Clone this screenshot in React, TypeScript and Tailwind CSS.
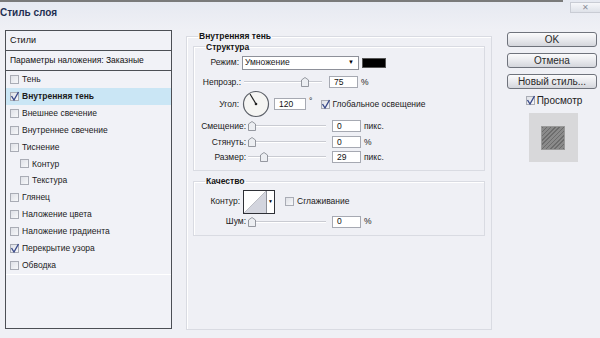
import React from "react";

const F = { fontFamily: '"Liberation Sans", Arial, sans-serif' };

function Check({ checked }: { checked?: boolean }) {
  return (
    <span className="relative inline-block w-[9px] h-[9px] border border-[#a9acb5] bg-gradient-to-br from-[#dfe1e7] to-[#f7f8fa] shrink-0">
      {checked && (
        <svg viewBox="0 0 10 10" className="absolute left-[-1px] top-[-2px] w-[10px] h-[11px]">
          <path d="M1.5 4.5 L4 8.5 L8.5 0.5" stroke="#3a4a8a" strokeWidth="1.4" fill="none" />
        </svg>
      )}
    </span>
  );
}

function ListRow({ label, checked, indent, active }: { label: string; checked?: boolean; indent?: boolean; active?: boolean }) {
  return (
    <div className={`flex items-center h-[16.9px] gap-[3px] ${indent ? "pl-[14px]" : "pl-[4px]"} ${active ? "bg-[#cae6f5]" : ""}`}>
      <Check checked={checked} />
      <span className={`text-[8.5px] text-[#1b1b1b] ${active ? "font-bold" : ""}`}>{label}</span>
    </div>
  );
}

function Slider({ pos }: { pos: number }) {
  return (
    <div className="relative w-[78px] h-[12px]">
      <div className="absolute left-0 right-0 top-[5px] h-[2px] bg-[#c9cbd2] border-b border-white" />
      <svg viewBox="0 0 8 10" className="absolute top-[1px] w-[8px] h-[10px]" style={{ left: pos }}>
        <path d="M0.5 3 L4 0.5 L7.5 3 L7.5 9.5 L0.5 9.5 Z" fill="#eceef2" stroke="#7d818a" strokeWidth="0.8" />
      </svg>
    </div>
  );
}

function Input({ value, w = 29 }: { value: string; w?: number }) {
  return (
    <div className="h-[12px] border border-[#a6a9b2] bg-white flex items-center pl-[4px] text-[8.5px] text-[#111]" style={{ width: w }}>
      {value}
    </div>
  );
}

function Btn({ label }: { label: string }) {
  return (
    <div className="h-[15px] w-[90px] rounded-[3px] border border-[#6f737c] bg-gradient-to-b from-[#fbfbfc] via-[#e9eaee] to-[#d4d6dc] flex items-center justify-center text-[10px] text-[#2a2a2a]">
      {label}
    </div>
  );
}

export default function App() {
  return (
    <div style={F} className="w-[600px] h-[338px] bg-[#eff0f5] flex flex-col overflow-hidden">
      {/* title bar */}
      <div className="h-[30px] flex flex-col bg-gradient-to-b from-[#e6e9f1] to-[#eff0f5]">
        <div className="flex h-[14px]">
          <div className="w-[563px] flex flex-col">
            <div className="h-[2px] bg-[#7a7a7a]" />
          </div>
          <div className="flex-1 h-[11px] mt-[2px] ml-[7px] border border-r-0 border-[#c9ccd4] bg-gradient-to-b from-[#f6f7fa] to-[#dfe2e9] flex items-center justify-center text-[8px] text-[#8a8e98] leading-none">
            ✕
          </div>
        </div>
        <div className="text-[10px] font-bold text-[#1f2f52] leading-none mt-[-6px]">Стиль слоя</div>
      </div>

      <div className="flex flex-1 pb-[8px]">
        {/* left list */}
        <div className="ml-[5px] w-[167px] h-[299px] border border-[#4c4f55] bg-[#f1f2f7] flex flex-col">
          <div className="h-[20px] border-b border-[#4c4f55] flex items-center pl-[4px] text-[9px] text-[#111]">Стили</div>
          <div className="h-[20px] border-b border-[#4c4f55] flex items-center pl-[4px] text-[8.5px] text-[#111]">
            Параметры наложения: Заказные
          </div>
          <div className="flex flex-col">
            <ListRow label="Тень" />
            <ListRow label="Внутренняя тень" checked active />
            <ListRow label="Внешнее свечение" />
            <ListRow label="Внутреннее свечение" />
            <ListRow label="Тиснение" />
            <ListRow label="Контур" indent />
            <ListRow label="Текстура" indent />
            <ListRow label="Глянец" />
            <ListRow label="Наложение цвета" />
            <ListRow label="Наложение градиента" />
            <ListRow label="Перекрытие узора" checked />
            <ListRow label="Обводка" />
          </div>
          <div className="h-[1px] bg-[#e3e5ec] border-b border-white" />
        </div>

        {/* middle */}
        <fieldset className="ml-[14px] mt-[2px] w-[306px] h-[298px] border border-[#d9dbe2] shadow-[inset_1px_1px_0_#ffffff] px-[6px] pb-[6px] min-w-0">
          <legend className="ml-[5px] px-[1px] text-[8.5px] font-bold text-[#151515] leading-none">Внутренняя тень</legend>

          <fieldset className="mt-[2px] border border-[#d9dbe2] shadow-[inset_1px_1px_0_#ffffff] pb-[6px] min-w-0">
            <legend className="ml-[11px] px-[1px] text-[8.5px] font-bold text-[#151515] leading-none">Структура</legend>
            <div className="flex flex-col text-[8.5px] text-[#1a1a1a]">
              {/* Режим */}
              <div className="flex items-center h-[15px] mt-[4px]">
                <div className="w-[48px] text-right pr-[3px]">Режим:</div>
                <div className="w-[117px] h-[14px] border border-[#8d9099] bg-white flex items-center pl-[2px] justify-between pr-[4px]">
                  <span>Умножение</span>
                  <span className="text-[6px] text-black">▼</span>
                </div>
                <div className="ml-[3px] w-[24px] h-[10px] bg-black border border-[#555]" />
              </div>
              {/* Непрозр */}
              <div className="flex items-center h-[14px] mt-[5px]">
                <div className="w-[50px] text-right pr-[3px]">Непрозр.:</div>
                <Slider pos={57} />
                <div className="ml-[7px]"><Input value="75" /></div>
                <span className="ml-[3px]">%</span>
              </div>
              {/* Угол */}
              <div className="flex items-center h-[28px] mt-[1px]">
                <div className="w-[48px] text-right pr-[3px]">Угол:</div>
                <svg viewBox="0 0 28 28" className="w-[28px] h-[28px]">
                  <circle cx="14" cy="14" r="12.5" fill="#f5f5f3" stroke="#5c6068" strokeWidth="1.2" />
                  <path d="M14 14 L8 4" stroke="#222" strokeWidth="1.2" />
                  <circle cx="14" cy="14" r="1.3" fill="#222" />
                </svg>
                <div className="ml-[4px]"><Input value="120" w={32} /></div>
                <span className="ml-[3px] mt-[-5px]">°</span>
                <div className="ml-[9px] flex items-center gap-[2px]">
                  <Check checked />
                  <span>Глобальное освещение</span>
                </div>
              </div>
              {/* Смещение */}
              <div className="flex items-center h-[14px] mt-[1px]">
                <div className="w-[54px] text-right pr-[2px]">Смещение:</div>
                <Slider pos={0} />
                <div className="ml-[6px]"><Input value="0" /></div>
                <span className="ml-[3px]">пикс.</span>
              </div>
              <div className="flex items-center h-[14px] mt-[2px]">
                <div className="w-[54px] text-right pr-[2px]">Стянуть:</div>
                <Slider pos={0} />
                <div className="ml-[6px]"><Input value="0" /></div>
                <span className="ml-[3px]">%</span>
              </div>
              <div className="flex items-center h-[14px] mt-[1px]">
                <div className="w-[54px] text-right pr-[2px]">Размер:</div>
                <Slider pos={12} />
                <div className="ml-[6px]"><Input value="29" /></div>
                <span className="ml-[3px]">пикс.</span>
              </div>
            </div>
          </fieldset>

          <fieldset className="mt-[6px] border border-[#d9dbe2] shadow-[inset_1px_1px_0_#ffffff] pb-[6px] min-w-0">
            <legend className="ml-[11px] px-[1px] text-[8.5px] font-bold text-[#151515] leading-none">Качество</legend>
            <div className="flex flex-col text-[8.5px] text-[#1a1a1a]">
              <div className="flex items-center h-[24px] mt-[4px]">
                <div className="w-[49px] text-right pr-[3px]">Контур:</div>
                <div className="w-[32px] h-[24px] border border-[#2e3036] bg-white flex">
                  <svg viewBox="0 0 22 22" preserveAspectRatio="none" className="w-[22px] h-full">
                    <path d="M0 22 L22 0 L22 22 Z" fill="#d3d5de" />
                    <path d="M0 22 L22 0" stroke="#9da0aa" strokeWidth="0.6" />
                  </svg>
                  <div className="flex-1 border-l border-[#8d9099] flex items-center justify-center text-[5px] text-black pt-[1px]">▼</div>
                </div>
                <div className="ml-[10px] flex items-center gap-[3px]">
                  <Check />
                  <span>Сглаживание</span>
                </div>
              </div>
              <div className="flex items-center h-[14px] mt-[1px]">
                <div className="w-[54px] text-right pr-[2px]">Шум:</div>
                <Slider pos={0} />
                <div className="ml-[6px]"><Input value="0" /></div>
                <span className="ml-[3px]">%</span>
              </div>
            </div>
          </fieldset>
        </fieldset>

        {/* right column */}
        <div className="ml-[15px] mt-[2px] flex flex-col gap-[6px]">
          <Btn label="OK" />
          <Btn label="Отмена" />
          <Btn label="Новый стиль..." />
          <div className="flex flex-col items-center">
            <div className="flex items-center gap-[2px] mt-[-2px] ml-[4px]">
              <Check checked />
              <span className="text-[10px] text-[#222]">Просмотр</span>
            </div>
            <div className="mt-[5px] ml-[2px] w-[49px] h-[49px] bg-[#d8d8da] flex items-center justify-center">
              <div className="w-[24px] h-[24px] bg-[repeating-linear-gradient(135deg,#6c6c6c_0px,#6c6c6c_1px,#8a8a8a_1px,#8a8a8a_3px)] border border-[#9a9a9a]" />
            </div>
          </div>
        </div>
      </div>
    </div>
  );
}
